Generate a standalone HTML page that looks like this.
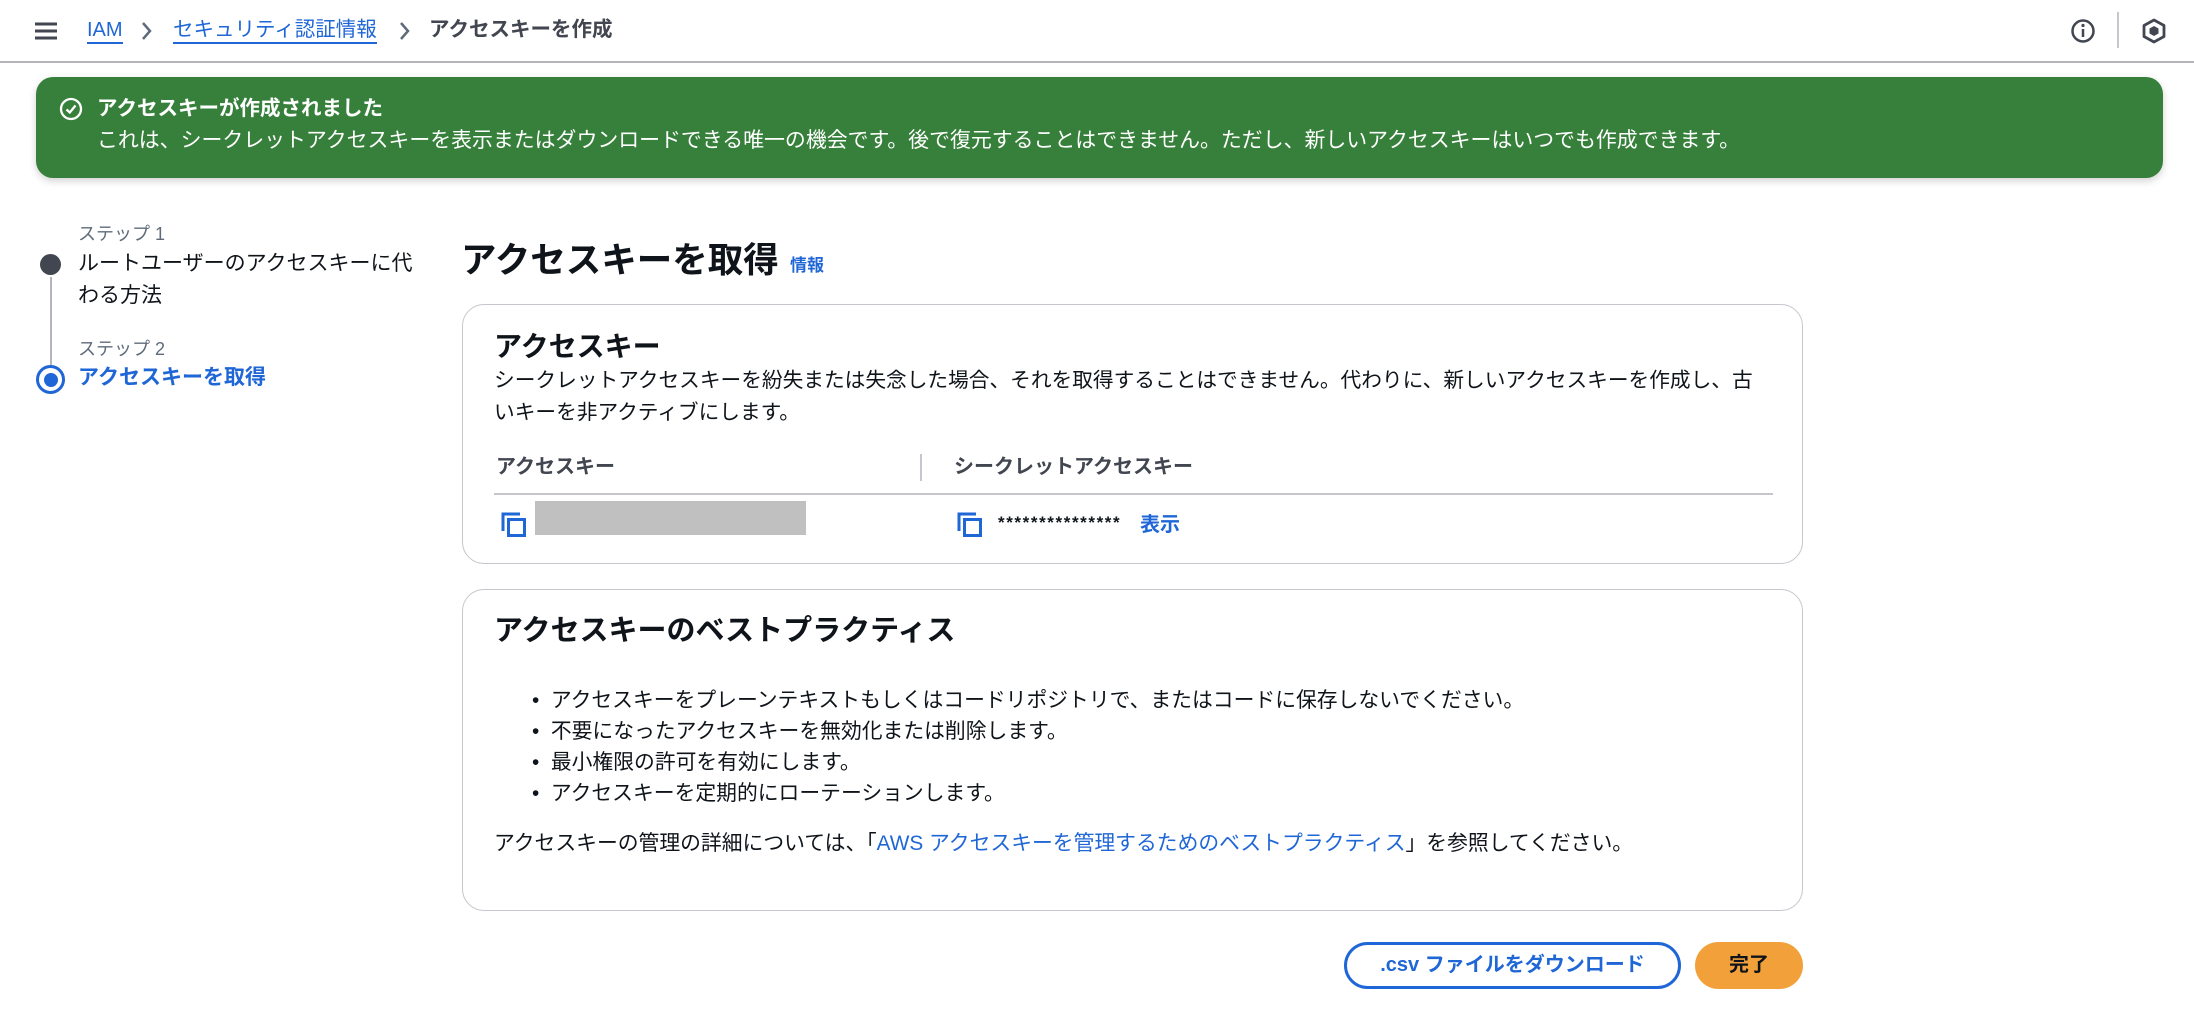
<!DOCTYPE html>
<html><head><meta charset="utf-8"><style>
*{box-sizing:border-box;margin:0;padding:0}
body{width:2194px;height:1016px;overflow:hidden;background:#fff;font-family:"Liberation Sans","Noto Sans CJK JP",sans-serif;color:#0f141a;position:relative}
.a{position:absolute;white-space:nowrap}
.blue{color:#1f66d6}
.card{position:absolute;border:1.5px solid #c6c6cd;border-radius:22px;background:#fff}
</style></head><body>
<!-- header -->
<div class="a" style="left:0;top:61px;width:2194px;height:1.5px;background:#b4b4bb"></div>
<svg class="a" style="left:35px;top:22px" width="22" height="18"><g stroke="#424650" stroke-width="3"><line x1="0" y1="2" x2="22" y2="2"/><line x1="0" y1="9" x2="22" y2="9"/><line x1="0" y1="16" x2="22" y2="16"/></g></svg>
<div class="a blue" style="left:87px;top:18px;font-size:20px;border-bottom:2px solid #1f66d6;line-height:24px">IAM</div>
<svg class="a" style="left:141px;top:21px" width="12" height="20"><path d="M2 2 L9 10 L2 18" stroke="#5f6b7a" stroke-width="2.5" fill="none"/></svg>
<div class="a blue" style="left:173px;top:18px;font-size:20.5px;border-bottom:2px solid #1f66d6;line-height:24px">セキュリティ認証情報</div>
<svg class="a" style="left:399px;top:21px" width="12" height="20"><path d="M2 2 L9 10 L2 18" stroke="#5f6b7a" stroke-width="2.5" fill="none"/></svg>
<div class="a" style="left:429px;top:18px;font-size:20.5px;color:#424650;line-height:24px;font-weight:bold">アクセスキーを作成</div>
<svg class="a" style="left:2070px;top:18px" width="26" height="26"><circle cx="13" cy="13" r="10.5" stroke="#424650" stroke-width="2.5" fill="none"/><line x1="13" y1="11" x2="13" y2="19" stroke="#424650" stroke-width="2.5"/><circle cx="13" cy="7.5" r="1.6" fill="#424650"/></svg>
<div class="a" style="left:2117px;top:12px;width:1.5px;height:36px;background:#c6c6cd"></div>
<svg class="a" style="left:2141px;top:18px" width="26" height="26"><path d="M13 2 L23 7.5 L23 18.5 L13 24 L3 18.5 L3 7.5 Z" stroke="#424650" stroke-width="2.8" fill="none" stroke-linejoin="round"/><path d="M13 8 L17.5 10.5 L17.5 15.5 L13 18 L8.5 15.5 L8.5 10.5 Z" fill="#424650"/></svg>
<!-- banner -->
<div class="a" style="left:36px;top:77px;width:2127px;height:101px;background:#37803b;border-radius:17px;box-shadow:0 3px 8px rgba(0,0,0,.18)"></div>
<svg class="a" style="left:59px;top:97px" width="24" height="24"><circle cx="12" cy="12" r="10" stroke="#fff" stroke-width="2.3" fill="none"/><path d="M7.5 12.5 L10.8 15.5 L16.5 8.5" stroke="#fff" stroke-width="2.3" fill="none"/></svg>
<div class="a" style="left:97px;top:96px;font-size:20.5px;color:#fff;font-weight:bold;line-height:26px">アクセスキーが作成されました</div>
<div class="a" style="left:97px;top:128px;font-size:20.9px;color:#fff;line-height:26px">これは、シークレットアクセスキーを表示またはダウンロードできる唯一の機会です。後で復元することはできません。ただし、新しいアクセスキーはいつでも作成できます。</div>
<!-- stepper -->
<div class="a" style="left:78px;top:220px;font-size:18px;color:#5f6b7a">ステップ 1</div>
<div class="a" style="left:78px;top:248px;font-size:21px;color:#0f141a;line-height:32px;white-space:normal;width:340px">ルートユーザーのアクセスキーに代わる方法</div>
<div class="a" style="left:40px;top:254px;width:21px;height:21px;border-radius:50%;background:#424650"></div>
<div class="a" style="left:49.5px;top:277px;width:2px;height:88px;background:#b4b4bb"></div>
<div class="a" style="left:78px;top:335px;font-size:18px;color:#5f6b7a">ステップ 2</div>
<div class="a blue" style="left:78px;top:362px;font-size:21px;font-weight:bold;line-height:32px">アクセスキーを取得</div>
<div class="a" style="left:36px;top:365px;width:29px;height:29px;border-radius:50%;border:3px solid #1f66d6;background:#fff"></div>
<div class="a" style="left:43.5px;top:372.5px;width:14px;height:14px;border-radius:50%;background:#1f66d6"></div>
<!-- title -->
<div class="a" style="left:461px;top:236px;font-size:35.5px;font-weight:bold;line-height:48px">アクセスキーを取得</div>
<div class="a blue" style="left:790px;top:251px;font-size:17px;font-weight:bold">情報</div>
<!-- card1 -->
<div class="card" style="left:462px;top:304px;width:1341px;height:260px"></div>
<div class="a" style="left:494px;top:328px;font-size:28px;font-weight:bold;line-height:38px">アクセスキー</div>
<div class="a" style="left:494px;top:365px;font-size:20.7px;line-height:32px;color:#0f141a;white-space:normal;width:1270px">シークレットアクセスキーを紛失または失念した場合、それを取得することはできません。代わりに、新しいアクセスキーを作成し、古いキーを非アクティブにします。</div>
<div class="a" style="left:496px;top:453px;font-size:20px;font-weight:bold;color:#424650;line-height:28px">アクセスキー</div>
<div class="a" style="left:920px;top:454px;width:2px;height:27px;background:#c6c6cd"></div>
<div class="a" style="left:954px;top:453px;font-size:20px;font-weight:bold;color:#424650;line-height:28px">シークレットアクセスキー</div>
<div class="a" style="left:494px;top:493px;width:1279px;height:1.5px;background:#c6c6cd"></div>
<svg class="a" style="left:501px;top:512px" width="26" height="26"><path d="M2 19 V2 H19" stroke="#1f66d6" stroke-width="3" fill="none"/><rect x="7.5" y="7.5" width="16" height="16" stroke="#1f66d6" stroke-width="3" fill="none"/></svg>
<div class="a" style="left:535px;top:501px;width:271px;height:34px;background:#c0c0c0"></div>
<svg class="a" style="left:957px;top:512px" width="26" height="26"><path d="M2 19 V2 H19" stroke="#1f66d6" stroke-width="3" fill="none"/><rect x="7.5" y="7.5" width="16" height="16" stroke="#1f66d6" stroke-width="3" fill="none"/></svg>
<div class="a" style="left:998px;top:511px;font-size:17px;font-weight:bold;line-height:24px;letter-spacing:1.6px">***************</div>
<div class="a blue" style="left:1140px;top:511px;font-size:20px;font-weight:bold;line-height:28px">表示</div>
<!-- card2 -->
<div class="card" style="left:462px;top:589px;width:1341px;height:322px"></div>
<div class="a" style="left:494px;top:611px;font-size:29px;font-weight:bold;line-height:40px">アクセスキーのベストプラクティス</div>
<div class="a" style="left:532px;top:685px;font-size:20.8px;line-height:31px">
<div>•&nbsp;&nbsp;アクセスキーをプレーンテキストもしくはコードリポジトリで、またはコードに保存しないでください。</div>
<div>•&nbsp;&nbsp;不要になったアクセスキーを無効化または削除します。</div>
<div>•&nbsp;&nbsp;最小権限の許可を有効にします。</div>
<div>•&nbsp;&nbsp;アクセスキーを定期的にローテーションします。</div>
</div>
<div class="a" style="left:494px;top:829px;font-size:20.8px;line-height:30px">アクセスキーの管理の詳細については、「<span class="blue">AWS アクセスキーを管理するためのベストプラクティス</span>」を参照してください。</div>
<!-- buttons -->
<div class="a" style="left:1344px;top:942px;width:337px;height:47px;border:3px solid #1f66d6;border-radius:24px;color:#1f66d6;font-size:20px;font-weight:bold;text-align:center;line-height:41px">.csv ファイルをダウンロード</div>
<div class="a" style="left:1695px;top:942px;width:108px;height:47px;background:#f2a03a;border-radius:24px;font-size:20px;font-weight:bold;text-align:center;line-height:47px;color:#0f141a">完了</div>
</body></html>
